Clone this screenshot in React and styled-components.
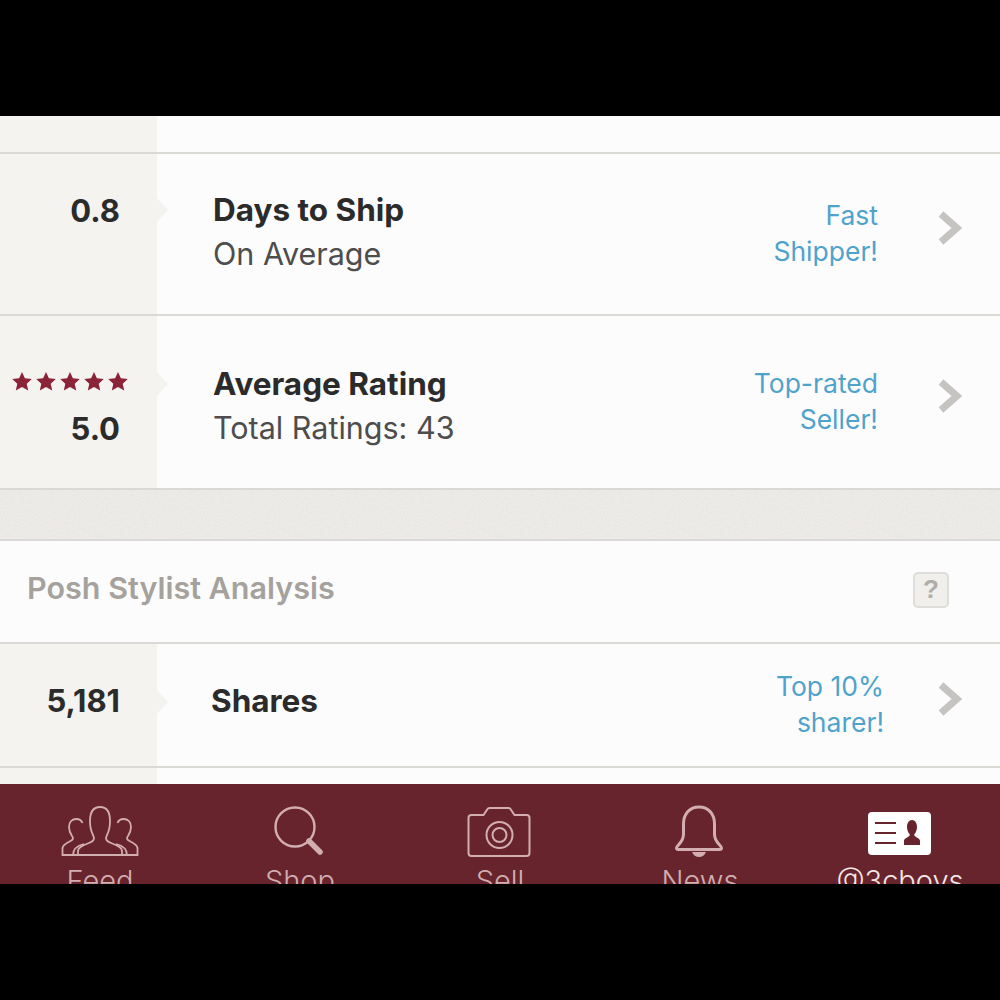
import styled, { createGlobalStyle } from "styled-components";

const GlobalStyle = createGlobalStyle`
  html, body {
    margin: 0;
    padding: 0;
    background: #000;
    font-family: "Inter", "Open Sans", sans-serif;
  }
`;

const noise = `url("data:image/svg+xml,%3Csvg xmlns='http://www.w3.org/2000/svg' width='200' height='200'%3E%3Cfilter id='n'%3E%3CfeTurbulence type='fractalNoise' baseFrequency='0.9' numOctaves='2'/%3E%3CfeColorMatrix values='0 0 0 0 0.55 0 0 0 0 0.53 0 0 0 0 0.5 0 0 0 0.35 -0.1'/%3E%3C/filter%3E%3Crect width='200' height='200' filter='url(%23n)'/%3E%3C/svg%3E")`;

function Chevron() {
  return (
    <svg width="24" height="34" viewBox="0 0 24 34">
      <path d="M3 3 L19 17 L3 31" fill="none" stroke="#c5c4c0" strokeWidth="7" />
    </svg>
  );
}

function Star() {
  return (
    <svg width="20" height="20" viewBox="0 0 20 20">
      <path
        d="M10 0 l2.900 6.300 6.900.8 -5.100 4.600 1.500 6.900 -6.200-3.500 -6.200 3.500 1.500-6.900 -5.100-4.600 6.900-.8z"
        fill="#8a2337"
      />
    </svg>
  );
}

function FeedIcon() {
  return (
    <svg width="80" height="54" viewBox="0 0 80 54" fill="none" stroke="#d2aeb1" strokeWidth="1.800">
      <path d="M18 51 v-4 c0-4 6-6 11-8 c5-2 6-4 4-8 c-2-4-3-9-3-14 c0-8 3-14 10-14 s10 6 10 14 c0 5-1 10-3 14 c-2 4-1 6 4 8 c5 2 11 4 11 8 v4 z" />
      <path d="M18 51 H2.500 v-7 c0-3 4-5 8-7 c3-1.500 3-3 1.500-5 c-2-3-3-6-3-9 c0-5 3-8 7.500-8 c3 0 5 1.500 6 4 M13 51 c0-5 3-9 11-11" />
      <path d="M62 51 H77.500 v-7 c0-3-4-5-8-7 c-3-1.500-3-3-1.500-5 c2-3 3-6 3-9 c0-5-3-8-7.500-8 c-3 0-5 1.500-6 4 M67 51 c0-5-3-9-11-11" />
    </svg>
  );
}

function ShopIcon() {
  return (
    <svg width="80" height="54" viewBox="0 0 80 54" fill="none" stroke="#d2aeb1">
      <circle cx="35" cy="23" r="19.500" strokeWidth="2.400" />
      <path d="M49 37 L60 48" strokeWidth="5.500" strokeLinecap="round" />
    </svg>
  );
}

function SellIcon() {
  return (
    <svg width="80" height="54" viewBox="0 0 80 54" fill="none" stroke="#d2aeb1" strokeWidth="2">
      <path d="M12 11 H24 l4-6 c.5-1 1-1 2-1 h19 c1 0 1.500 0 2 1 l4 6 h12 c2 0 3 1 3 3 v35 c0 2-1 3-3 3 H12 c-2 0-3-1-3-3 V14 c0-2 1-3 3-3z" transform="translate(-.5 0)" />
      <circle cx="39.500" cy="31" r="13" />
      <circle cx="39.500" cy="31" r="7" />
    </svg>
  );
}

function NewsIcon() {
  return (
    <svg width="80" height="54" viewBox="0 0 80 54" fill="none" stroke="#d2aeb1" strokeWidth="3">
      <path d="M16.500 44 c0-3 7-5 7-14 V20 c0-10 6-17 15.500-17 s15.500 7 15.500 17 v10 c0 9 7 11 7 14 c0 1-1 1.500-2 1.500 H18.500 c-1 0-2-.5-2-1.500z" />
      <path d="M32 48 h14 c-1 3-4 5-7 5 s-6-2-7-5z" fill="#d2aeb1" stroke="none" />
    </svg>
  );
}

function ProfileIcon() {
  return (
    <svg width="80" height="54" viewBox="0 0 80 54">
      <rect x="8" y="8" width="63" height="43" rx="4" fill="#fff" />
      <path d="M15 19 H36 M15 29 H36 M15 39 H36" stroke="#67242c" strokeWidth="2" />
      <path d="M44 41 v-4 c0-3 4-3 6-6 c-2-3-3-5-3-8 c0-4 2-7 5-7 s5 3 5 7 c0 3-1 5-3 8 c2 3 6 3 6 6 v4z" fill="#67242c" />
    </svg>
  );
}

const tabs = [
  { label: "Feed", Icon: FeedIcon },
  { label: "Shop", Icon: ShopIcon },
  { label: "Sell", Icon: SellIcon },
  { label: "News", Icon: NewsIcon },
  { label: "@3cboys", Icon: ProfileIcon, active: true },
];

export default function App() {
  return (
    <Page>
      <GlobalStyle />
      <Screen>
        <Content>
          <Spacer>
            <Side />
          </Spacer>

          <Row $height={160}>
            <Side $top={35}>
              <Value>0.8</Value>
            </Side>
            <Notch $top={44} />
            <Body $left={56}>
              <Titles $up={4}>
                <Title>Days to Ship</Title>
                <Sub>On Average</Sub>
              </Titles>
              <Badge $right={60} $up={2}>
                Fast
                <br />
                Shipper!
              </Badge>
              <Arrow>
                <Chevron />
              </Arrow>
            </Body>
          </Row>

          <Row $height={172}>
            <Side $top={56}>
              <Stars>
                {[0, 1, 2, 3, 4].map((n) => (
                  <Star key={n} />
                ))}
              </Stars>
              <Value>5.0</Value>
            </Side>
            <Notch $top={56} />
            <Body $left={56}>
              <Titles $down={8}>
                <Title>Average Rating</Title>
                <Sub>Total Ratings: 43</Sub>
              </Titles>
              <Badge $right={60} $up={2}>
                Top-rated
                <br />
                Seller!
              </Badge>
              <Arrow>
                <Chevron />
              </Arrow>
            </Body>
          </Row>

          <Band />

          <Header>
            <HeaderTitle>Posh Stylist Analysis</HeaderTitle>
            <Help>?</Help>
          </Header>

          <Row $height={122}>
            <Side $top={35}>
              <Value>5,181</Value>
            </Side>
            <Notch $top={46} />
            <Body $left={54}>
              <Titles $up={8}>
                <Title>Shares</Title>
              </Titles>
              <Badge $right={54} $up={2}>
                Top 10%
                <br />
                sharer!
              </Badge>
              <Arrow>
                <Chevron />
              </Arrow>
            </Body>
          </Row>

          <Remainder>
            <Side />
          </Remainder>
        </Content>

        <TabBar>
          {tabs.map(({ label, Icon, active }) => (
            <Tab key={label}>
              <Icon />
              <TabLabel $active={active}>{label}</TabLabel>
            </Tab>
          ))}
        </TabBar>
      </Screen>
    </Page>
  );
}

const Page = styled.div`
  width: 1000px;
  height: 1000px;
  padding-top: 116px;
  box-sizing: border-box;
  background: #000;
  overflow: hidden;
`;

const Screen = styled.div`
  width: 1000px;
  height: 768px;
  display: flex;
  flex-direction: column;
  overflow: hidden;
  background: #fdfcfd;
`;

const Content = styled.div`
  height: 668px;
  display: flex;
  flex-direction: column;
`;

const Spacer = styled.div`
  height: 36px;
  display: flex;
  border-bottom: 2px solid #dbd9d5;
`;

const Remainder = styled.div`
  flex: 1;
  display: flex;
`;

const Row = styled.div`
  position: relative;
  height: ${(p) => p.$height}px;
  display: flex;
  border-bottom: 2px solid #dbd9d5;
`;

const Side = styled.div`
  width: 157px;
  flex-shrink: 0;
  padding-top: ${(p) => p.$top || 0}px;
  padding-right: 37px;
  box-sizing: border-box;
  background: #f4f3f0;
  display: flex;
  flex-direction: column;
  align-items: flex-end;
`;

const Notch = styled.div`
  position: absolute;
  left: 157px;
  top: ${(p) => p.$top}px;
  width: 0;
  height: 0;
  border-top: 12px solid transparent;
  border-bottom: 12px solid transparent;
  border-left: 11px solid #f4f3f0;
`;

const Value = styled.div`
  font-size: 31px;
  font-weight: 700;
  line-height: 44px;
  color: #2b2b2b;
`;

const Stars = styled.div`
  display: flex;
  margin-right: -8px;
  margin-bottom: 15px;
  gap: 4px;
`;

const Body = styled.div`
  flex: 1;
  display: flex;
  align-items: center;
  padding-left: ${(p) => p.$left}px;
  padding-right: 38px;
`;

const Titles = styled.div`
  flex: 1;
  padding-top: ${(p) => p.$down || 0}px;
  padding-bottom: ${(p) => p.$up || 0}px;
`;

const Title = styled.div`
  font-size: 31.5px;
  font-weight: 700;
  line-height: 44px;
  color: #2b2b2b;
`;

const Sub = styled.div`
  font-size: 30.5px;
  font-weight: 400;
  line-height: 44px;
  color: #4d4d4d;
`;

const Badge = styled.div`
  margin-right: ${(p) => p.$right}px;
  padding-bottom: ${(p) => p.$up || 0}px;
  text-align: right;
  font-size: 26.5px;
  line-height: 36px;
  color: #4ea3cc;
`;

const Arrow = styled.div`
  display: flex;
  padding-bottom: 13px;
`;

const Band = styled.div`
  height: 49px;
  background-color: #efedea;
  background-image: ${noise};
  border-bottom: 2px solid #dbd9d5;
`;

const Header = styled.div`
  height: 103px;
  display: flex;
  align-items: center;
  justify-content: space-between;
  padding: 0 51px 4px 27px;
  box-sizing: border-box;
  border-bottom: 2px solid #dbd9d5;
`;

const HeaderTitle = styled.div`
  font-size: 30.5px;
  font-weight: 600;
  margin-bottom: 4px;
  color: #a5a29d;
`;

const Help = styled.div`
  width: 32px;
  height: 32px;
  border: 2px solid #dfddd9;
  border-radius: 5px;
  background: #f1efec;
  display: flex;
  align-items: center;
  justify-content: center;
  font-family: "Liberation Sans", sans-serif;
  font-size: 26px;
  font-weight: 700;
  color: #b0aeaa;
`;

const TabBar = styled.div`
  height: 100px;
  background: #67242c;
  display: grid;
  grid-template-columns: repeat(5, 1fr);
`;

const Tab = styled.div`
  display: flex;
  flex-direction: column;
  align-items: center;
  padding-top: 20px;
`;

const TabLabel = styled.div`
  font-size: 29px;
  font-weight: 300;
  line-height: 34px;
  margin-top: 6px;
  white-space: nowrap;
  color: ${(p) => (p.$active ? "#f3e6e7" : "#d2aeb1")};
`;
